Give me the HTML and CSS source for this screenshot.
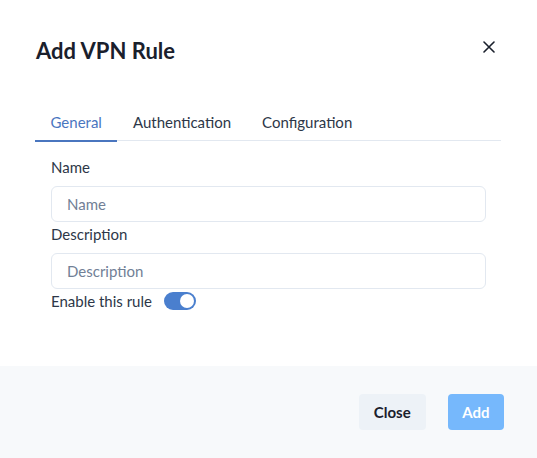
FILE: index.html
```html
<!DOCTYPE html>
<html lang="en">
<head>
<meta charset="utf-8">
<title>Add VPN Rule</title>
<link rel="stylesheet" href="styles.css">
</head>
<body>
<div class="modal">
  <header class="modal-header">
    <h2 class="title">Add VPN Rule</h2>
    <button class="close-x" aria-label="Close">
      <svg width="12" height="12" viewBox="0 0 12 12"><path d="M1 1L11 11M11 1L1 11" stroke="#1a202c" stroke-width="1.6" stroke-linecap="round"/></svg>
    </button>
  </header>
  <div class="modal-body">
    <div class="tablist">
      <button class="tab active">General</button>
      <button class="tab">Authentication</button>
      <button class="tab">Configuration</button>
    </div>
    <div class="tabpanel">
      <label class="label">Name</label>
      <input class="input" placeholder="Name">
      <label class="label">Description</label>
      <input class="input" placeholder="Description">
      <div class="switch-row">
        <span class="switch-label">Enable this rule</span>
        <span class="switch"><span class="thumb"></span></span>
      </div>
    </div>
  </div>
  <footer class="modal-footer">
    <button class="btn btn-close">Close</button>
    <button class="btn btn-add">Add</button>
  </footer>
</div>
</body>
</html>
```
FILE: styles.css
```css
* { box-sizing: border-box; }
html, body { margin: 0; padding: 0; }
body {
  width: 537px;
  height: 458px;
  background: #ffffff;
  font-family: "Lato", "Liberation Sans", sans-serif;
  color: #1a202c;
  overflow: hidden;
}
.modal {
  width: 537px;
  height: 458px;
  display: flex;
  flex-direction: column;
}
.modal-header {
  display: flex;
  justify-content: space-between;
  align-items: flex-start;
  padding: 36px 38px 38px 36px;
}
.title {
  margin: 0;
  font-size: 22px;
  line-height: 29px;
  font-weight: 700;
  color: #1a202c;
}
.close-x {
  width: 20px;
  height: 20px;
  margin-top: 1px;
  padding: 0;
  border: 0;
  background: transparent;
  display: flex;
  align-items: center;
  justify-content: center;
}
.modal-body {
  padding: 0 36px 38px 35px;
  flex: 1;
}
.tablist {
  display: flex;
  border-bottom: 1px solid #e2e8f0;
}
.tab {
  font-family: inherit;
  font-size: 15px;
  line-height: 22px;
  padding: 8px 15.5px 7px;
  border: 0;
  border-bottom: 2px solid transparent;
  margin-bottom: -2px;
  background: transparent;
  color: #2d3748;
}
.tab.active {
  color: #4a76bf;
  border-bottom-color: #4a76bf;
}
.tabpanel {
  padding: 15px 16px 16px;
  display: flex;
  flex-direction: column;
}
.label {
  font-size: 15px;
  line-height: 22px;
  color: #2d3748;
  margin-bottom: 8px;
}
.input {
  width: 435px;
  height: 36px;
  border: 1px solid #e2e8f0;
  border-radius: 6px;
  padding: 0 15px;
  font-family: inherit;
  font-size: 15px;
  color: #1a202c;
  outline: none;
  margin-bottom: 1px;
}
.input::placeholder { color: #718096; }
.switch-row {
  display: flex;
  align-items: center;
  gap: 12px;
  font-size: 15px;
  line-height: 22px;
  color: #2d3748;
}
.switch {
  width: 32px;
  height: 18px;
  border-radius: 9px;
  background: #4a7fce;
  padding: 2px;
  display: flex;
  justify-content: flex-end;
}
.thumb {
  width: 14px;
  height: 14px;
  border-radius: 50%;
  background: #ffffff;
}
.modal-footer {
  background: #f7f9fb;
  height: 92px;
  display: flex;
  justify-content: flex-end;
  align-items: center;
  gap: 22px;
  padding: 0 33px 0 0;
}
.btn {
  height: 36px;
  border: 0;
  border-radius: 4px;
  font-family: inherit;
  font-size: 15px;
  font-weight: 700;
  padding: 0 15px;
}
.btn-close {
  background: #edf2f7;
  color: #1a202c;
}
.btn-add {
  background: #76b8fc;
  color: #ffffff;
  padding: 0 14.5px;
}
```
